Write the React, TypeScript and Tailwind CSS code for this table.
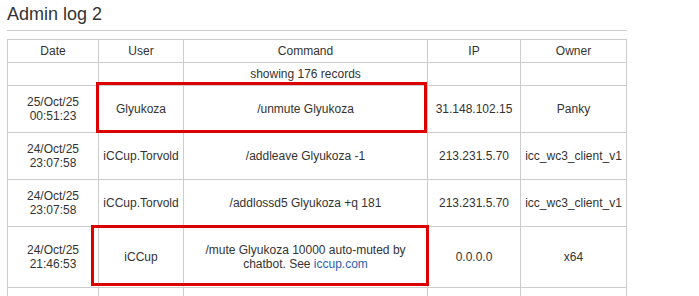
import React from "react";

type Row = { date: [string, string]; user: string; cmd: React.ReactNode; ip: string; owner: string; h: string };

const rows: Row[] = [
  { date: ["25/Oct/25", "00:51:23"], user: "Glyukoza", cmd: "/unmute Glyukoza", ip: "31.148.102.15", owner: "Panky", h: "h-[47px]" },
  { date: ["24/Oct/25", "23:07:58"], user: "iCCup.Torvold", cmd: "/addleave Glyukoza -1", ip: "213.231.5.70", owner: "icc_wc3_client_v1", h: "h-[47px]" },
  { date: ["24/Oct/25", "23:07:58"], user: "iCCup.Torvold", cmd: "/addlossd5 Glyukoza +q 181", ip: "213.231.5.70", owner: "icc_wc3_client_v1", h: "h-[47px]" },
  {
    date: ["24/Oct/25", "21:46:53"],
    user: "iCCup",
    cmd: (
      <>
        /mute Glyukoza 10000 auto-muted by
        <br />
        chatbot. See <span className="text-[#2a62b0]">iccup.com</span>
      </>
    ),
    ip: "0.0.0.0",
    owner: "x64",
    h: "h-[61px]",
  },
];

const cell = "border-r border-b border-[#cccccc] flex items-center justify-center text-center px-1";

export default function App() {
  return (
    <div className="relative w-[699px] h-[296px] overflow-hidden bg-white text-[#333333] font-['Liberation_Sans',Arial,sans-serif]">
      <div className="pl-[7px] w-[627px]">
        <h3 className="pt-[4px] text-[18px] leading-[20px] font-normal">Admin log 2</h3>
        <div className="mt-[6px] h-px bg-[#cccccc]" />
        <div className="mt-[8px] grid grid-cols-[91px_85px_244px_93px_106px] border-l border-t border-[#cccccc] text-[12px] leading-[14px]">
          {["Date", "User", "Command", "IP", "Owner"].map((h) => (
            <div key={h} className={`${cell} h-[23px]`}>{h}</div>
          ))}
          <div className={`${cell} h-[23px]`} />
          <div className={`${cell} h-[23px]`} />
          <div className={`${cell} h-[23px]`}>showing 176 records</div>
          <div className={`${cell} h-[23px]`} />
          <div className={`${cell} h-[23px]`} />
          {rows.map((r, i) => (
            <React.Fragment key={i}>
              <div className={`${cell} ${r.h}`}>
                <div>
                  {r.date[0]}
                  <br />
                  {r.date[1]}
                </div>
              </div>
              <div className={`${cell} ${r.h}`}>{r.user}</div>
              <div className={`${cell} ${r.h}`}>
                <div>{r.cmd}</div>
              </div>
              <div className={`${cell} ${r.h}`}>{r.ip}</div>
              <div className={`${cell} ${r.h}`}>{r.owner}</div>
            </React.Fragment>
          ))}
          <div className={`${cell} h-[47px]`} />
          <div className={`${cell} h-[47px]`} />
          <div className={`${cell} h-[47px]`} />
          <div className={`${cell} h-[47px]`} />
          <div className={`${cell} h-[47px]`} />
        </div>
      </div>
      <div className="absolute left-[96px] top-[82px] w-[331px] h-[51px] border-[3px] border-[#dd0000]" />
      <div className="absolute left-[91px] top-[225px] w-[338px] h-[61px] border-[3px] border-[#dd0000]" />
    </div>
  );
}
